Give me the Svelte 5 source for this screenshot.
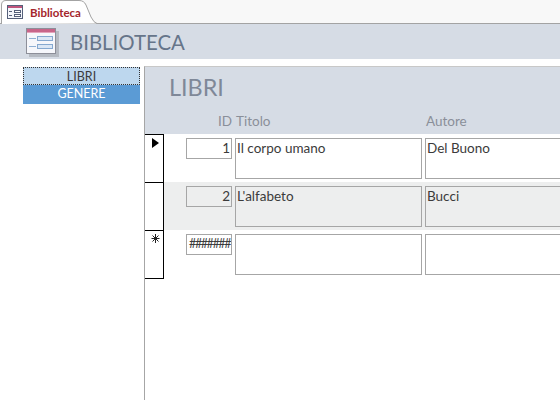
<script lang="ts">
	const rows = [
		{ id: '1', titolo: 'Il corpo umano', autore: 'Del Buono', mark: 'current' },
		{ id: '2', titolo: "L'alfabeto", autore: 'Bucci', mark: '', alt: true },
		{ id: '#######', titolo: '', autore: '', mark: 'new', blank: true }
	];
</script>

{#snippet formIcon(large)}
	{#if large}
		<svg class="big-icon" width="33" height="29" viewBox="0 0 33 29">
			<rect x="3" y="3" width="30" height="26" fill="#9a9ea6" opacity="0.55" />
			<rect x="0.5" y="0.5" width="29" height="25" fill="#f6f7fb" stroke="#8d8f99" />
			<rect x="1" y="1" width="28" height="4" fill="#c8668a" />
			<rect x="1" y="4" width="28" height="1" fill="#e4a3bb" />
			<path d="M3 10.5h7M3 18.5h7" stroke="#8fb0d4" fill="none" />
			<rect x="11.5" y="8.5" width="15" height="4" fill="#dbe7f5" stroke="#86a9d0" />
			<rect x="11.5" y="16.5" width="15" height="4" fill="#dbe7f5" stroke="#86a9d0" />
		</svg>
	{:else}
		<svg class="tab-icon" width="16" height="14" viewBox="0 0 16 14">
			<rect x="0.5" y="0.5" width="15" height="13" fill="#f4f6fb" stroke="#55607a" />
			<rect x="1" y="1" width="14" height="2" fill="#c0557c" />
			<path d="M2 6.5h3M2 10.5h3" stroke="#55607a" fill="none" />
			<rect x="7.5" y="5.5" width="6" height="2" fill="#fff" stroke="#55607a" />
			<rect x="7.5" y="9.5" width="6" height="2" fill="#fff" stroke="#55607a" />
		</svg>
	{/if}
{/snippet}

<div class="window">
	<div class="tabbar">
		<div class="tab">
			<svg class="tab-shape" width="96" height="24" viewBox="0 0 96 24">
				<path d="M0.5 24V5Q0.5 0.5 5 0.5H78Q83 0.5 85 5L90 17Q93 23 96 23.5" fill="#fff" stroke="#a3a3a3" />
			</svg>
			{@render formIcon(false)}
			<span class="tab-label">Biblioteca</span>
		</div>
	</div>

	<header class="title-bar">
		{@render formIcon(true)}
		<h1>BIBLIOTECA</h1>
	</header>

	<div class="body">
		<nav class="side">
			<div class="nav-item active">LIBRI</div>
			<div class="nav-item">GENERE</div>
		</nav>

		<section class="subform">
			<div class="form-head">
				<h2>LIBRI</h2>
				<div class="cols">
					<span class="col-id">ID</span>
					<span class="col-titolo">Titolo</span>
					<span class="col-autore">Autore</span>
				</div>
			</div>

			{#each rows as r}
				<div class="row" class:alt={r.alt}>
					<div class="selector">
						{#if r.mark === 'current'}
							<svg width="7" height="10" viewBox="0 0 7 10"><path d="M0 0L7 5L0 10Z" fill="#000" /></svg>
						{:else if r.mark === 'new'}
							<svg width="9" height="9" viewBox="0 0 9 9">
								<path d="M4.5 0V9M0.5 4.5H8.5M1.5 1.5L7.5 7.5M7.5 1.5L1.5 7.5" stroke="#222" stroke-width="1" fill="none" />
							</svg>
						{/if}
					</div>
					<div class="fields">
						<div class="box id" class:hash={r.blank}>{r.id}</div>
						<div class="box text">{r.titolo}</div>
						<div class="box text autore">{r.autore}</div>
					</div>
				</div>
			{/each}
			<div class="selector-end"></div>
		</section>
	</div>
</div>

<style>
	:global(body) {
		margin: 0;
		background: #fff;
	}

	.window {
		width: 560px;
		height: 400px;
		overflow: hidden;
		display: flex;
		flex-direction: column;
		font-family: Lato, "Open Sans", sans-serif;
		background: #fff;
	}

	.tabbar {
		height: 23px;
		flex: none;
		display: flex;
		background: #f8f8f8;
		border-bottom: 1px solid #a3a3a3;
		padding-left: 1px;
		box-sizing: content-box;
	}

	.tab {
		position: relative;
		width: 95px;
		height: 24px;
		display: flex;
		align-items: center;
		gap: 7px;
		padding-left: 6px;
		box-sizing: border-box;
	}

	.tab-shape {
		position: absolute;
		left: 0;
		top: 0;
	}

	.tab-icon,
	.tab-label {
		position: relative;
	}

	.tab-label {
		font-size: 11.5px;
		font-weight: 700;
		color: #a4262c;
		white-space: nowrap;
	}

	.title-bar {
		height: 35px;
		flex: none;
		display: flex;
		align-items: flex-start;
		gap: 11px;
		padding: 4px 0 0 26px;
		box-sizing: border-box;
		background: #d6dce5;
	}

	.big-icon {
		flex: none;
	}

	h1 {
		margin: 0;
		font-size: 20.4px;
		line-height: 29px;
		font-weight: 400;
		color: #66758a;
		letter-spacing: 0;
	}

	.body {
		flex: 1;
		display: flex;
		padding-top: 7px;
	}

	.side {
		width: 117px;
		margin: 1px 4px 0 23px;
		flex: none;
	}

	.nav-item {
		height: 19px;
		line-height: 18px;
		text-align: center;
		font-size: 12.5px;
		color: #fff;
		background: #5b9bd5;
	}

	.nav-item.active {
		height: 18px;
		box-sizing: border-box;
		line-height: 17px;
		color: #3b3b3b;
		background: #bdd7ee;
		border: 1px dotted #333;
	}

	.subform {
		flex: 1;
		min-width: 0;
		border-left: 1px solid #a6a6a6;
		border-top: 1px solid #c8c8c8;
	}

	.form-head {
		height: 67px;
		background: #d6dce5;
		box-sizing: border-box;
		padding-top: 5px;
		position: relative;
	}

	h2 {
		margin: 0 0 0 24px;
		font-size: 23.4px;
		line-height: 30px;
		font-weight: 400;
		color: #7f8898;
	}

	.cols {
		position: relative;
		margin-top: 11px;
		display: flex;
		font-size: 13.5px;
		line-height: 17px;
		color: #8a8f99;
	}

	.col-id {
		width: 87px;
		text-align: right;
	}

	.col-titolo {
		width: 190px;
		margin-left: 4px;
	}

	.col-autore {
		margin-left: 0;
	}

	.row {
		height: 48px;
		display: flex;
	}

	.row.alt .fields {
		background: #edeeee;
	}

	.selector {
		width: 18px;
		flex: none;
		box-sizing: content-box;
		height: 47px;
		border-top: 1px solid #000;
		border-right: 1px solid #000;
		display: flex;
		justify-content: center;
		align-items: flex-start;
	}

	.selector svg {
		margin-top: 3px;
		margin-left: 2px;
	}

	.selector-end {
		width: 19px;
		border-top: 1px solid #000;
	}

	.fields {
		flex: 1;
		min-width: 0;
		display: flex;
		align-items: flex-start;
		padding: 4px 0 0 22px;
		gap: 3px;
	}

	.box {
		box-sizing: border-box;
		border: 1px solid #a6a6a6;
		font-size: 13.5px;
		color: #3b3b3b;
		flex: none;
	}

	.id {
		width: 46px;
		height: 21px;
		line-height: 18px;
		text-align: right;
		padding-right: 1px;
		overflow: hidden;
		white-space: nowrap;
	}

	.hash {
		font-size: 12.5px;
		letter-spacing: -1.4px;
	}

	.text {
		width: 187px;
		height: 41px;
		line-height: 18px;
		padding-left: 1px;
	}

	.autore {
		width: 150px;
	}
</style>
